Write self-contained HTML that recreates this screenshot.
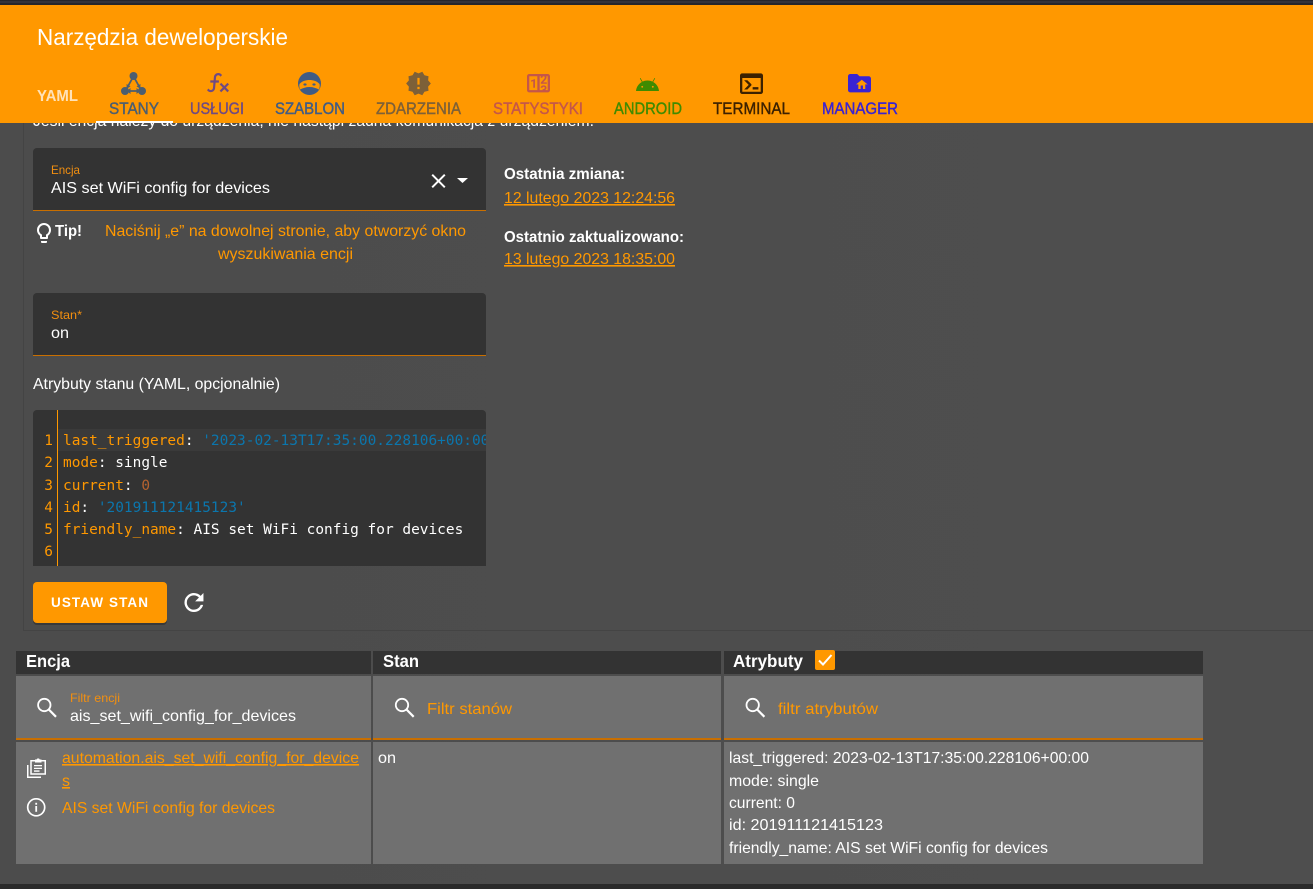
<!DOCTYPE html>
<html lang="pl">
<head>
<meta charset="utf-8">
<title>Narzędzia deweloperskie</title>
<style>
html,body{margin:0;padding:0;width:1313px;height:889px;overflow:hidden;background:#4d4d4d}
svg{display:block}
text{font-family:"Liberation Sans",sans-serif;white-space:pre}
.m{font-family:"DejaVu Sans Mono","Liberation Mono",monospace;font-size:14.46px}
.o{fill:#ff9800}
.w{fill:#fff}
.tab{font-size:16.5px;font-weight:400;stroke-width:.4px}
</style>
</head>
<body>
<svg xmlns="http://www.w3.org/2000/svg" width="1313" height="889" viewBox="0 0 1313 889">
<defs>
<clipPath id="code"><rect x="33" y="410" width="453" height="156"/></clipPath>
<linearGradient id="bg" x1="0" y1="0" x2="1" y2="0"><stop offset="0" stop-color="#4c4c4c"/><stop offset="1" stop-color="#4e4e4e"/></linearGradient>
</defs>
<rect width="1313" height="889" fill="url(#bg)"/>

<!-- card outline -->
<rect x="23" y="100" width="1" height="530" fill="#444"/>
<rect x="23" y="630" width="1290" height="1" fill="#444"/>

<!-- text behind header -->
<text x="33" y="126" class="w" font-size="16" textLength="561" lengthAdjust="spacingAndGlyphs">Jeśli encja należy do urządzenia, nie nastąpi żadna komunikacja z urządzeniem.</text>

<!-- header -->
<rect width="1313" height="5" fill="#26262c"/>
<rect y="1" width="1313" height="2" fill="#33333b"/>
<rect y="5" width="1313" height="118" fill="#ff9800"/>
<text x="37" y="45" class="w" font-size="23.5" textLength="251" lengthAdjust="spacingAndGlyphs">Narzędzia deweloperskie</text>
<text x="37" y="101" fill="#ffe2b8" font-size="16" font-weight="700" textLength="41" lengthAdjust="spacingAndGlyphs">YAML</text>
<rect x="96" y="121" width="77" height="2" fill="#fff"/>

<!-- stany icon -->
<g fill="#4b5e70" stroke="#4b5e70">
<circle cx="133.5" cy="76" r="4" stroke="none"/>
<circle cx="125" cy="91" r="4" stroke="none"/>
<circle cx="142" cy="91" r="4" stroke="none"/>
<path d="M132 79L127 88M135 79L140 88M129 91H138" stroke-width="1.8" fill="none"/>
<path d="M126.500 84l.3 4.600 3.700-2.200zM140.500 84l-.3 4.600-3.700-2.200zM130.500 88v6l-3.500-3zM136.500 88v6l3.500-3z" stroke="none"/>
</g>
<text x="109" y="114" class="tab" fill="#4b5e70" stroke="#4b5e70" textLength="50" lengthAdjust="spacingAndGlyphs">STANY</text>

<!-- usługi icon -->
<svg x="204.800" y="69.400" width="26.400" height="26.400" viewBox="0 0 24 24"><path fill="#6f4a83" d="M12.42,5.29C11.32,5.19 10.35,6 10.25,7.11L10,10H12.82V12H9.82L9.38,17.07C9.18,19.27 7.24,20.9 5.04,20.7C3.79,20.59 2.66,19.9 2,18.83L3.5,17.33C3.83,18.38 4.96,18.97 6,18.63C6.78,18.39 7.33,17.7 7.4,16.89L7.82,12H5V10H8L8.27,6.93C8.46,4.73 10.39,3.1 12.6,3.28C13.86,3.39 15,4.09 15.66,5.17L14.16,6.67C13.91,5.9 13.23,5.36 12.42,5.29M22,13.65L20.59,12.24L17.76,15.07L14.93,12.24L13.5,13.65L16.35,16.5L13.5,19.31L14.93,20.72L17.76,17.89L20.59,20.72L22,19.31L19.17,16.5L22,13.65Z"/></svg>
<text x="190" y="114" class="tab" fill="#6f4a83" stroke="#6f4a83" textLength="54" lengthAdjust="spacingAndGlyphs">USŁUGI</text>

<!-- szablon icon -->
<circle cx="309.500" cy="83.500" r="11.500" fill="#405c85"/>
<path d="M299.500 84C302 81 306 80 309.500 80S317 81 319.500 84C320 86 319.500 88 319 89.500C316 88 313 87 309.500 87S303 88 300 89.500C299.500 88 299 86 299.500 84Z" fill="#ff9800"/>
<ellipse cx="305" cy="84.500" rx="1.600" ry="1.100" fill="#405c85"/>
<ellipse cx="314" cy="84.500" rx="1.600" ry="1.100" fill="#405c85"/>
<text x="275" y="114" class="tab" fill="#405c85" stroke="#405c85" textLength="70" lengthAdjust="spacingAndGlyphs">SZABLON</text>

<!-- zdarzenia icon -->
<svg x="405" y="70" width="27" height="27" viewBox="0 0 24 24"><path fill="#7d6038" d="M23,12L20.56,9.22L20.9,5.54L17.29,4.72L15.4,1.54L12,3L8.6,1.54L6.71,4.72L3.1,5.53L3.44,9.21L1,12L3.44,14.78L3.1,18.47L6.71,19.29L8.6,22.47L12,21L15.4,22.46L17.29,19.28L20.9,18.46L20.56,14.78L23,12M13,17H11V15H13V17M13,13H11V7H13V13Z"/></svg>
<text x="376" y="114" class="tab" fill="#7d6038" stroke="#7d6038" textLength="85" lengthAdjust="spacingAndGlyphs">ZDARZENIA</text>

<!-- statystyki icon -->
<svg x="524.700" y="69.400" width="27.600" height="27.600" viewBox="0 0 24 24"><path fill="#c4564a" d="M4,4H20A2,2 0 0,1 22,6V18A2,2 0 0,1 20,20H4A2,2 0 0,1 2,18V6A2,2 0 0,1 4,4M4,6V18H11V6H4M20,18V6H18.76C19,6.54 18.95,7.07 18.95,7.13C18.88,7.8 18.41,8.5 18.24,8.75L15.91,11.3L19.23,11.28L19.24,12.5L14.04,12.47L14,11.47C14,11.47 17.05,8.24 17.2,7.95C17.34,7.67 17.91,6 16.5,6C15.27,6.05 15.41,7.3 15.41,7.3L13.87,7.31C13.87,7.31 13.88,6.65 14.25,6H13V18H15.58L15.57,17.14L16.54,17.13C16.54,17.13 17.45,16.97 17.46,16.08C17.5,15.08 16.65,15.08 16.5,15.08C16.37,15.08 15.43,15.13 15.43,15.95H13.91C13.91,15.95 13.95,13.89 16.5,13.89C19.1,13.89 18.96,15.91 18.96,15.91C18.96,15.91 19,17.16 17.85,17.63L18.37,18H20M8.92,16H7.42V10.2L5.62,10.76V9.53L8.76,8.41H8.92V16Z"/></svg>
<text x="493" y="114" class="tab" fill="#c4564a" stroke="#c4564a" textLength="90" lengthAdjust="spacingAndGlyphs">STATYSTYKI</text>

<!-- android icon -->
<svg x="633.700" y="70.300" width="27.600" height="27.600" viewBox="0 0 24 24"><path fill="#3f8b00" d="M16.61 15.15C16.15 15.15 15.77 14.78 15.77 14.32S16.15 13.5 16.61 13.5H16.61C17.07 13.5 17.45 13.86 17.45 14.32C17.45 14.78 17.07 15.15 16.61 15.15M7.41 15.15C6.95 15.15 6.57 14.78 6.57 14.32C6.57 13.86 6.95 13.5 7.41 13.5H7.41C7.87 13.5 8.24 13.86 8.24 14.32C8.24 14.78 7.87 15.15 7.41 15.15M16.91 10.14L18.58 7.26C18.67 7.09 18.61 6.88 18.45 6.79C18.28 6.69 18.07 6.75 18 6.92L16.29 9.83C14.95 9.22 13.5 8.9 12 8.91C10.47 8.91 9 9.24 7.73 9.82L6.04 6.91C5.95 6.74 5.74 6.68 5.57 6.78C5.4 6.87 5.35 7.08 5.44 7.25L7.1 10.13C4.25 11.69 2.29 14.58 2 18H22C21.72 14.59 19.77 11.7 16.91 10.14H16.91Z"/></svg>
<text x="614" y="114" class="tab" fill="#3f8b00" stroke="#3f8b00" textLength="68" lengthAdjust="spacingAndGlyphs">ANDROID</text>

<!-- terminal icon -->
<svg x="737.700" y="69.900" width="27.600" height="27.600" viewBox="0 0 24 24"><path fill="#3c2100" d="M20,19V7H4V19H20M20,3A2,2 0 0,1 22,5V19A2,2 0 0,1 20,21H4A2,2 0 0,1 2,19V5C2,3.89 2.9,3 4,3H20M13,17V15H18V17H13M9.58,13L5.57,9H8.4L11.7,12.3C12.09,12.69 12.09,13.33 11.7,13.72L8.42,17H5.59L9.58,13Z"/></svg>
<text x="713" y="114" class="tab" fill="#3c2100" stroke="#3c2100" textLength="77" lengthAdjust="spacingAndGlyphs">TERMINAL</text>

<!-- manager icon -->
<svg x="845.700" y="69.400" width="27.600" height="27.600" viewBox="0 0 24 24"><path fill="#3a23d2" d="M20,6H12L10,4H4A2,2 0 0,0 2,6V18A2,2 0 0,0 4,20H20A2,2 0 0,0 22,18V8A2,2 0 0,0 20,6M17,13V17H15V14H13V17H11V13H9L14,9L19,13H17Z"/></svg>
<text x="822" y="114" class="tab" fill="#3a23d2" stroke="#3a23d2" textLength="76" lengthAdjust="spacingAndGlyphs">MANAGER</text>

<!-- entity field -->
<path d="M33 210V152a4 4 0 0 1 4-4H482a4 4 0 0 1 4 4V210Z" fill="#333"/>
<rect x="33" y="210" width="453" height="1" fill="#c96f00"/>
<text x="51" y="174" fill="#f28f10" font-size="12" textLength="29" lengthAdjust="spacingAndGlyphs">Encja</text>
<text x="51" y="193" class="w" font-size="16" textLength="219" lengthAdjust="spacingAndGlyphs">AIS set WiFi config for devices</text>
<svg x="426.500" y="169" width="24" height="24" viewBox="0 0 24 24"><path fill="#fff" d="M19,6.41L17.59,5L12,10.59L6.41,5L5,6.41L10.59,12L5,17.59L6.41,19L12,13.41L17.59,19L19,17.59L13.41,12L19,6.41Z"/></svg>
<path d="M457 178H468L462.500 183Z" fill="#fff"/>

<!-- tip -->
<svg x="32" y="221" width="24" height="24" viewBox="0 0 24 24"><path fill="#fff" d="M12,2A7,7 0 0,1 19,9C19,11.38 17.81,13.47 16,14.74V17A1,1 0 0,1 15,18H9A1,1 0 0,1 8,17V14.74C6.19,13.47 5,11.38 5,9A7,7 0 0,1 12,2M9,21V20H15V21A1,1 0 0,1 14,22H10A1,1 0 0,1 9,21M12,4A5,5 0 0,0 7,9C7,11.05 8.23,12.81 10,13.58V16H14V13.58C15.77,12.81 17,11.05 17,9A5,5 0 0,0 12,4Z"/></svg>
<text x="55" y="236" class="w" font-size="16" font-weight="700" textLength="27" lengthAdjust="spacingAndGlyphs">Tip!</text>
<text x="105" y="236" class="o" font-size="16" textLength="361" lengthAdjust="spacingAndGlyphs">Naciśnij „e” na dowolnej stronie, aby otworzyć okno</text>
<text x="218" y="259" class="o" font-size="16" textLength="135" lengthAdjust="spacingAndGlyphs">wyszukiwania encji</text>

<!-- state field -->
<path d="M33 355V297a4 4 0 0 1 4-4H482a4 4 0 0 1 4 4V355Z" fill="#333"/>
<rect x="33" y="355" width="453" height="1" fill="#c96f00"/>
<text x="51" y="319" fill="#f28f10" font-size="12" textLength="31" lengthAdjust="spacingAndGlyphs">Stan*</text>
<text x="51" y="338" class="w" font-size="16" textLength="18" lengthAdjust="spacingAndGlyphs">on</text>
<text x="33" y="389" class="w" font-size="16" textLength="247" lengthAdjust="spacingAndGlyphs">Atrybuty stanu (YAML, opcjonalnie)</text>

<!-- code editor -->
<path d="M33 566V414a4 4 0 0 1 4-4H482a4 4 0 0 1 4 4V566Z" fill="#333"/>
<rect x="58" y="429" width="428" height="22" fill="#3a3a3a"/>
<rect x="57" y="410" width="1" height="156" fill="#ff9800"/>
<g clip-path="url(#code)" class="m">
<g class="o m" text-anchor="end">
<text x="53" y="445" class="m o">1</text>
<text x="53" y="467" class="m o">2</text>
<text x="53" y="490" class="m o">3</text>
<text x="53" y="512" class="m o">4</text>
<text x="53" y="534" class="m o">5</text>
<text x="53" y="556" class="m o">6</text>
</g>
<text x="63" y="445" class="m" fill="#fff"><tspan fill="#ff9800">last_triggered</tspan>: <tspan fill="#0b76ad">'2023-02-13T17:35:00.228106+00:00'</tspan></text>
<text x="63" y="467" class="m" fill="#fff"><tspan fill="#ff9800">mode</tspan>: single</text>
<text x="63" y="490" class="m" fill="#fff"><tspan fill="#ff9800">current</tspan>: <tspan fill="#b5622f">0</tspan></text>
<text x="63" y="512" class="m" fill="#fff"><tspan fill="#ff9800">id</tspan>: <tspan fill="#0b76ad">'201911121415123'</tspan></text>
<text x="63" y="534" class="m" fill="#fff"><tspan fill="#ff9800">friendly_name</tspan>: AIS set WiFi config for devices</text>
</g>

<!-- button -->
<rect x="33" y="584" width="134" height="41" rx="4" fill="#000" opacity=".25"/>
<rect x="33" y="582" width="134" height="41" rx="4" fill="#ff9800"/>
<text x="51" y="607" class="w" font-size="13.500" font-weight="700" textLength="97" lengthAdjust="spacing">USTAW STAN</text>
<svg x="179.700" y="588.300" width="28.500" height="28.500" viewBox="0 0 24 24"><path fill="#fff" d="M17.65,6.35C16.2,4.9 14.21,4 12,4A8,8 0 0,0 4,12A8,8 0 0,0 12,20C15.73,20 18.84,17.45 19.73,14H17.65C16.83,16.33 14.61,18 12,18A6,6 0 0,1 6,12A6,6 0 0,1 12,6C13.66,6 15.14,6.69 16.22,7.78L13,11H20V4L17.65,6.35Z"/></svg>

<!-- right details -->
<text x="504" y="179" class="w" font-size="16" font-weight="700" textLength="121" lengthAdjust="spacingAndGlyphs">Ostatnia zmiana:</text>
<text x="504" y="203" class="o" font-size="16" text-decoration="underline" textLength="171" lengthAdjust="spacingAndGlyphs">12 lutego 2023 12:24:56</text>
<text x="504" y="242" class="w" font-size="16" font-weight="700" textLength="180" lengthAdjust="spacingAndGlyphs">Ostatnio zaktualizowano:</text>
<text x="504" y="264" class="o" font-size="16" text-decoration="underline" textLength="171" lengthAdjust="spacingAndGlyphs">13 lutego 2023 18:35:00</text>

<!-- table -->
<rect x="16" y="651" width="355" height="23" fill="#333"/>
<rect x="373" y="651" width="348" height="23" fill="#333"/>
<rect x="724" y="651" width="479" height="23" fill="#333"/>
<rect x="16" y="676" width="355" height="62" fill="#707070"/>
<rect x="373" y="676" width="348" height="62" fill="#707070"/>
<rect x="724" y="676" width="479" height="62" fill="#707070"/>
<rect x="16" y="738" width="355" height="2" fill="#c96f00"/>
<rect x="373" y="738" width="348" height="2" fill="#c96f00"/>
<rect x="724" y="738" width="479" height="2" fill="#c96f00"/>
<rect x="16" y="742" width="355" height="122" fill="#707070"/>
<rect x="373" y="742" width="348" height="122" fill="#707070"/>
<rect x="724" y="742" width="479" height="122" fill="#707070"/>

<text x="26" y="667" class="w" font-size="17.500" font-weight="700" textLength="44" lengthAdjust="spacingAndGlyphs">Encja</text>
<text x="383" y="667" class="w" font-size="17.500" font-weight="700" textLength="36" lengthAdjust="spacingAndGlyphs">Stan</text>
<text x="733" y="667" class="w" font-size="17.500" font-weight="700" textLength="70" lengthAdjust="spacingAndGlyphs">Atrybuty</text>
<rect x="815" y="650" width="20" height="20" rx="2" fill="#ff9800"/>
<path d="M819 660.500L823 664.500L831.500 655" fill="none" stroke="#fff" stroke-width="2"/>

<!-- search icons -->
<g fill="none" stroke="#fff">
<circle cx="44.300" cy="705" r="6.200" stroke-width="1.800"/><path d="M48.800 709.500L56 716.800" stroke-width="2.200"/>
<circle cx="402" cy="705" r="6.200" stroke-width="1.800"/><path d="M406.500 709.500L413.700 716.800" stroke-width="2.200"/>
<circle cx="752.700" cy="705" r="6.200" stroke-width="1.800"/><path d="M757.200 709.500L764.400 716.800" stroke-width="2.200"/>
</g>

<text x="70" y="702" fill="#f28f10" font-size="12" textLength="50" lengthAdjust="spacingAndGlyphs">Filtr encji</text>
<text x="70" y="721" class="w" font-size="16" textLength="226" lengthAdjust="spacingAndGlyphs">ais_set_wifi_config_for_devices</text>
<text x="427" y="714" class="o" font-size="16" textLength="85" lengthAdjust="spacingAndGlyphs">Filtr stanów</text>
<text x="778" y="714" class="o" font-size="16" textLength="100" lengthAdjust="spacingAndGlyphs">filtr atrybutów</text>

<!-- clipboard icon -->
<g fill="none" stroke="#fff" stroke-width="1.500">
<path d="M31 760.750H45.250V774H31ZM27.750 765V777.250H41"/>
</g>
<path d="M35 762.500V759.500H36.500a1.800 1.800 0 0 1 3.300 0H41.500V762.500ZM34 765H42V766.300H34ZM34 767.700H42V769H34ZM34 770.400H39.500V771.700H34Z" fill="#fff"/>

<!-- info icon -->
<circle cx="36.200" cy="807.300" r="8.500" fill="none" stroke="#fff" stroke-width="1.700"/>
<rect x="35.300" y="806" width="1.800" height="5.800" fill="#fff"/>
<rect x="35.300" y="802.800" width="1.800" height="1.900" fill="#fff"/>

<text x="62" y="763" class="o" font-size="16" text-decoration="underline" textLength="297" lengthAdjust="spacingAndGlyphs">automation.ais_set_wifi_config_for_device</text>
<text x="62" y="786" class="o" font-size="16" text-decoration="underline">s</text>
<text x="62" y="813" class="o" font-size="16" textLength="213" lengthAdjust="spacingAndGlyphs">AIS set WiFi config for devices</text>
<text x="378" y="763" class="w" font-size="16" textLength="18" lengthAdjust="spacingAndGlyphs">on</text>

<text x="729" y="763" class="w" font-size="16" textLength="360" lengthAdjust="spacingAndGlyphs">last_triggered: 2023-02-13T17:35:00.228106+00:00</text>
<text x="729" y="786" class="w" font-size="16" textLength="90" lengthAdjust="spacingAndGlyphs">mode: single</text>
<text x="729" y="808" class="w" font-size="16" textLength="66" lengthAdjust="spacingAndGlyphs">current: 0</text>
<text x="729" y="830" class="w" font-size="16" textLength="154" lengthAdjust="spacingAndGlyphs">id: 201911121415123</text>
<text x="729" y="853" class="w" font-size="16" textLength="319" lengthAdjust="spacingAndGlyphs">friendly_name: AIS set WiFi config for devices</text>

<!-- bottom strip -->
<rect y="884" width="1313" height="5" fill="#2b2b2b"/>
</svg>
</body>
</html>
